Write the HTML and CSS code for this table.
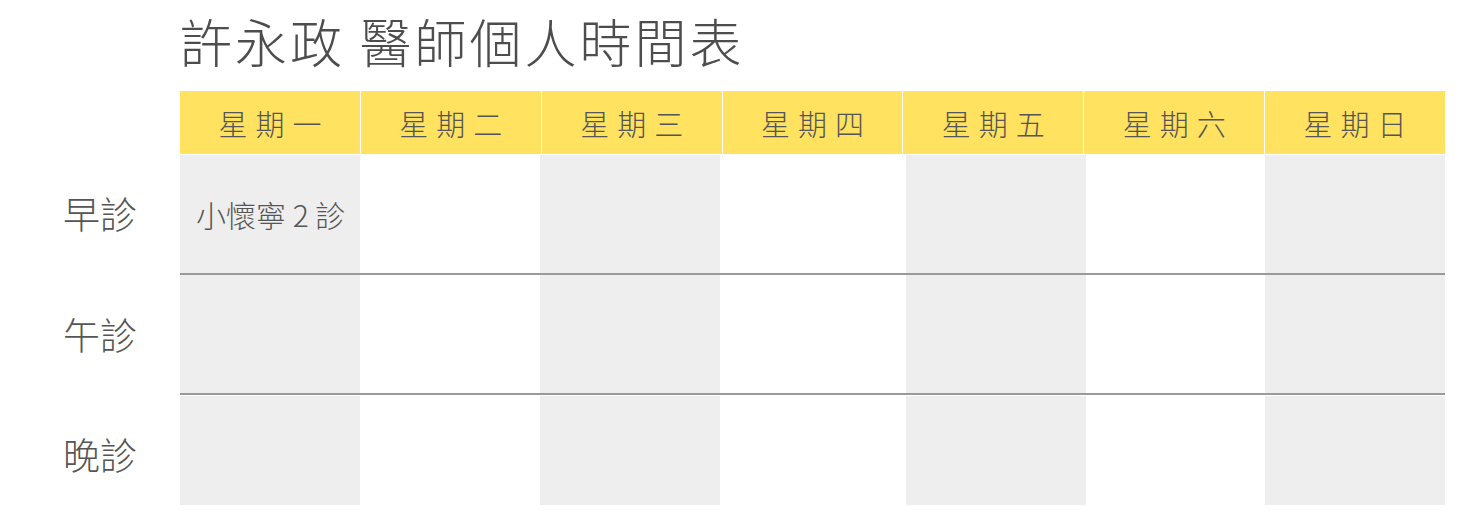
FILE: index.html
```html
<!DOCTYPE html>
<html lang="zh-Hant">
<head>
<meta charset="utf-8">
<title>許永政 醫師個人時間表</title>
<link rel="stylesheet" href="styles.css">
</head>
<body>
<div class="page">
  <h1 class="title">許永政 醫師個人時間表</h1>
  <div class="head">
    <div class="hcell">星期一</div>
    <div class="hcell">星期二</div>
    <div class="hcell">星期三</div>
    <div class="hcell">星期四</div>
    <div class="hcell">星期五</div>
    <div class="hcell">星期六</div>
    <div class="hcell">星期日</div>
  </div>

  <div class="label">早診</div>
  <div class="row">
    <div class="cell grey">小懷寧 2 診</div>
    <div class="cell"></div>
    <div class="cell grey"></div>
    <div class="cell"></div>
    <div class="cell grey"></div>
    <div class="cell"></div>
    <div class="cell grey"></div>
  </div>

  <div class="label">午診</div>
  <div class="row">
    <div class="cell grey"></div>
    <div class="cell"></div>
    <div class="cell grey"></div>
    <div class="cell"></div>
    <div class="cell grey"></div>
    <div class="cell"></div>
    <div class="cell grey"></div>
  </div>

  <div class="label">晚診</div>
  <div class="row row-last">
    <div class="cell grey"></div>
    <div class="cell"></div>
    <div class="cell grey"></div>
    <div class="cell"></div>
    <div class="cell grey"></div>
    <div class="cell"></div>
    <div class="cell grey"></div>
  </div>
</div>
</body>
</html>
```

FILE: styles.css
```css
html, body {
  margin: 0;
  padding: 0;
  background: #ffffff;
}

body {
  font-family: "Noto Sans CJK TC", "Noto Sans", sans-serif;
  color: #555555;
}

.page {
  display: grid;
  grid-template-columns: 180px 1265px;
  grid-template-rows: 91px 64px 120px 121px 120px;
}

.title {
  grid-column: 2;
  margin: 0;
  padding-top: 15px;
  box-sizing: border-box;
  font-size: 52px;
  line-height: 52px;
  font-weight: 300;
  letter-spacing: 3px;
  color: #4d4d4d;
}

.head {
  grid-column: 2;
  display: grid;
  grid-template-columns: repeat(7, 1fr);
  column-gap: 1px;
  margin-bottom: 1px;
}

.hcell {
  background: #ffe25f;
  display: flex;
  align-items: center;
  justify-content: center;
  padding-left: 8px;
  font-size: 29px;
  letter-spacing: 8px;
  font-weight: 300;
  color: #555555;
}

.label {
  grid-column: 1;
  display: flex;
  align-items: center;
  justify-content: center;
  padding-left: 20px;
  padding-bottom: 4px;
  font-size: 37px;
  font-weight: 300;
  color: #555555;
}

.row {
  grid-column: 2;
  display: grid;
  grid-template-columns: 180px 180px 180px 186px 180px 179px 180px;
  align-self: start;
  height: 120px;
}

.row-last {
  height: 109px;
}

.cell {
  background: #ffffff;
  border-bottom: 2px solid #9a9a9a;
  display: flex;
  align-items: center;
  padding-left: 16px;
  font-size: 30px;
  font-weight: 300;
  color: #555555;
}

.row-last .cell {
  border-bottom: none;
}

.grey {
  background: #eeeeee;
}
```
